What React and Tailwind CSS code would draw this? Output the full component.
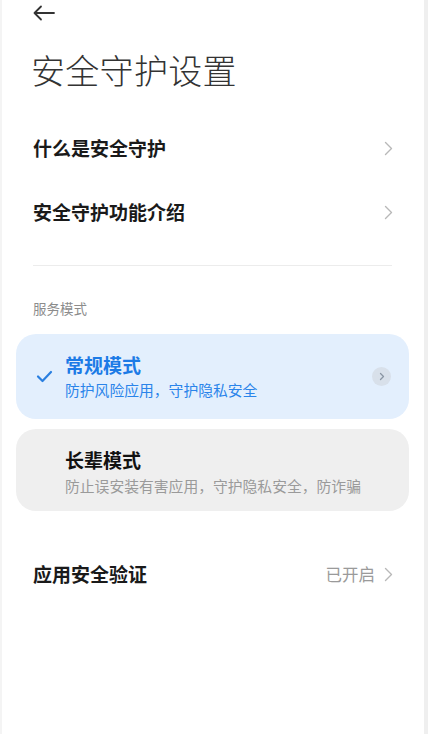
const font = { fontFamily: '"Noto Sans CJK SC", "Noto Sans", sans-serif' };

const Chevron = ({ className = '' }) => (
  <svg width="9" height="15" viewBox="0 0 9 15" fill="none" className={className}>
    <path d="M1.5 1.5 L7.5 7.5 L1.5 13.5" stroke="#b8b8b8" strokeWidth="1.4" strokeLinecap="round" strokeLinejoin="round" />
  </svg>
);

const Row = ({ label, value }) => (
  <div className="flex items-center justify-between h-[64px] pl-[31px] pr-[31px]">
    <span className="text-[19px] leading-[24px] font-bold text-[#1a1a1a]">{label}</span>
    <div className="flex items-center gap-[9px]">
      {value && <span className="text-[16.5px] text-[#9a9a9a]">{value}</span>}
      <Chevron />
    </div>
  </div>
);

export default function App() {
  return (
    <div
      className="w-[428px] h-[734px] bg-white overflow-hidden border-l-2 border-l-[#f4f4f4] border-r-4 border-r-[#efefef]"
      style={font}
    >
      {/* back */}
      <div className="h-[26px] flex items-center pl-[30px]">
        <svg width="24" height="16" viewBox="0 0 24 16" fill="none">
          <path d="M22 8 H2.5 M9 1.5 L2.5 8 L9 14.5" stroke="#333" strokeWidth="1.8" strokeLinecap="round" strokeLinejoin="round" />
        </svg>
      </div>

      <h1 className="mt-[27px] pl-[29px] text-[34px] leading-[34px] font-light text-[#333] tracking-[0.3px]">安全守护设置</h1>

      <div className="mt-[29px]">
        <Row label="什么是安全守护" />
        <Row label="安全守护功能介绍" />
      </div>

      <div className="mt-[21px] ml-[31px] mr-[32px] h-px bg-[#ececec]" />

      <div className="mt-[35px] pl-[31px] text-[13.5px] leading-[14px] text-[#8c8c8c]">服务模式</div>

      {/* normal mode */}
      <div className="mt-[19px] ml-[14px] mr-[15px] h-[85px] rounded-[20px] bg-[#e3effd] flex">
        <div className="pl-[20px] flex items-center">
          <svg width="17" height="13" viewBox="0 0 17 13" fill="none">
            <path d="M2 6.5 L6.5 11 L15 2" stroke="#2a7fe0" strokeWidth="2.2" strokeLinecap="round" strokeLinejoin="round" />
          </svg>
        </div>
        <div className="flex-1 ml-[12px] pt-[19px] flex flex-col gap-[3px]">
          <span className="text-[19px] leading-[24px] font-bold text-[#1c7be6]">常规模式</span>
          <span className="text-[14.8px] leading-[20px] text-[#2a84ea]">防护风险应用，守护隐私安全</span>
        </div>
        <div className="mr-[18px] flex items-center">
          <div className="w-[19px] h-[19px] rounded-full bg-[#d8e0ea] flex items-center justify-center">
            <svg width="6" height="9" viewBox="0 0 6 9" fill="none">
              <path d="M1.5 1.5 L4.5 4.5 L1.5 7.5" stroke="#8a95a3" strokeWidth="1.3" strokeLinecap="round" strokeLinejoin="round" />
            </svg>
          </div>
        </div>
      </div>

      {/* elder mode */}
      <div className="mt-[10px] ml-[14px] mr-[15px] h-[82px] rounded-[20px] bg-[#efefef] pl-[49px] pt-[19px] flex flex-col gap-[4px]">
        <span className="text-[19px] leading-[24px] font-bold text-[#111]">长辈模式</span>
        <span className="text-[14.8px] leading-[20px] text-[#9a9a9a]">防止误安装有害应用，守护隐私安全，防诈骗</span>
      </div>

      <div className="mt-[31px]">
        <Row label="应用安全验证" value="已开启" />
      </div>
    </div>
  );
}
